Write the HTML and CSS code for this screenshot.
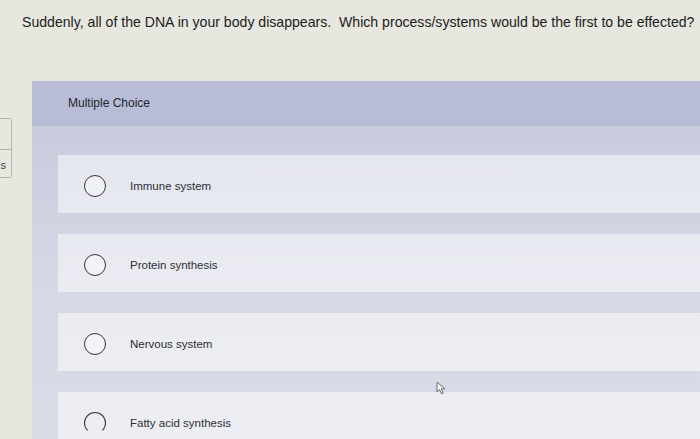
FILE: index.html
```html
<!DOCTYPE html>
<html lang="en">
<head>
  <meta charset="UTF-8" />
  <meta name="viewport" content="width=device-width, initial-scale=1.0"/>
  <title>Multiple Choice</title>
  <link rel="stylesheet" href="styles.css">
</head>
<body>
  <div class="page">
    <div class="side">
      <div class="side-box">
        <div class="side-cell"></div>
        <div class="side-cell">s</div>
      </div>
    </div>

    <div class="main">
      <p class="question">Suddenly, all of the DNA in your body disappears.&nbsp; Which process/systems would be the first to be effected?</p>

      <div class="panel">
        <div class="panel-head">Multiple Choice</div>
        <div class="panel-body">
          <label class="option">
            <span class="radio"></span>
            <span class="option-text">Immune system</span>
          </label>
          <label class="option">
            <span class="radio"></span>
            <span class="option-text">Protein synthesis</span>
          </label>
          <label class="option">
            <span class="radio"></span>
            <span class="option-text">Nervous system</span>
          </label>
          <label class="option">
            <span class="radio faded"></span>
            <span class="option-text">Fatty acid synthesis</span>
          </label>
        </div>
      </div>
    </div>
  </div>

  <!-- mouse pointer -->
  <svg class="cursor" width="11" height="14" viewBox="0 0 11 14">
    <path d="M1 1 L1 11 L3.5 8.6 L5.4 12.8 L7.2 12 L5.3 7.9 L8.8 7.9 Z" fill="#f4f4f4" stroke="#6b6b6b" stroke-width="1" stroke-linejoin="round"/>
  </svg>
</body>
</html>
```

FILE: styles.css
```css
body {
  margin: 0;
  font-family: "Liberation Sans", Arial, sans-serif;
  background: #e7e6df;
  color: #1c1c1c;
  overflow: hidden;
}

.page {
  display: flex;
  height: 439px;
  overflow: hidden;
}

.side {
  width: 12px;
  padding-top: 118px;
  overflow: hidden;
}

.side-box {
  margin-left: -30px;
  width: 40px;
  border: 1px solid #b3b3ad;
  border-radius: 3px;
}

.side-cell {
  height: 30px;
  font-size: 11px;
  color: #444;
  text-align: right;
  padding-right: 5px;
  line-height: 30px;
}

.side-cell + .side-cell {
  height: 27px;
  border-top: 1px solid #b3b3ad;
}

.main {
  flex: 1;
  padding-left: 10px;
}

.question {
  margin: 14px 0 0;
  font-size: 14.1px;
  line-height: 16px;
  white-space: nowrap;
}

.panel {
  margin-top: 51px;
  margin-left: 10px;
}

.panel-head {
  height: 45px;
  padding-left: 36px;
  background: #b8bcd6;
  font-size: 12px;
  line-height: 45px;
  color: #23252e;
}

.panel-body {
  display: flex;
  flex-direction: column;
  gap: 21px;
  padding: 29px 0 0 26px;
  height: 400px;
  background: linear-gradient(#c8cbdd, #d6d9e5 40%, #dcdfe6);
}

.option {
  box-sizing: border-box;
  display: flex;
  align-items: center;
  height: 58px;
  padding-top: 4px;
  padding-left: 26px;
  background: rgba(255, 255, 255, 0.5);
  cursor: pointer;
}

.radio {
  width: 20px;
  height: 20px;
  border: 1.5px solid #34353a;
  border-radius: 50%;
  background: rgba(255, 255, 255, 0.4);
}

.radio.faded {
  border-bottom-color: transparent;
  background: transparent;
}

.option-text {
  margin-left: 24px;
  font-size: 11.5px;
  color: #2c2e34;
}

.cursor {
  position: absolute;
  left: 436px;
  top: 381px;
}
```
